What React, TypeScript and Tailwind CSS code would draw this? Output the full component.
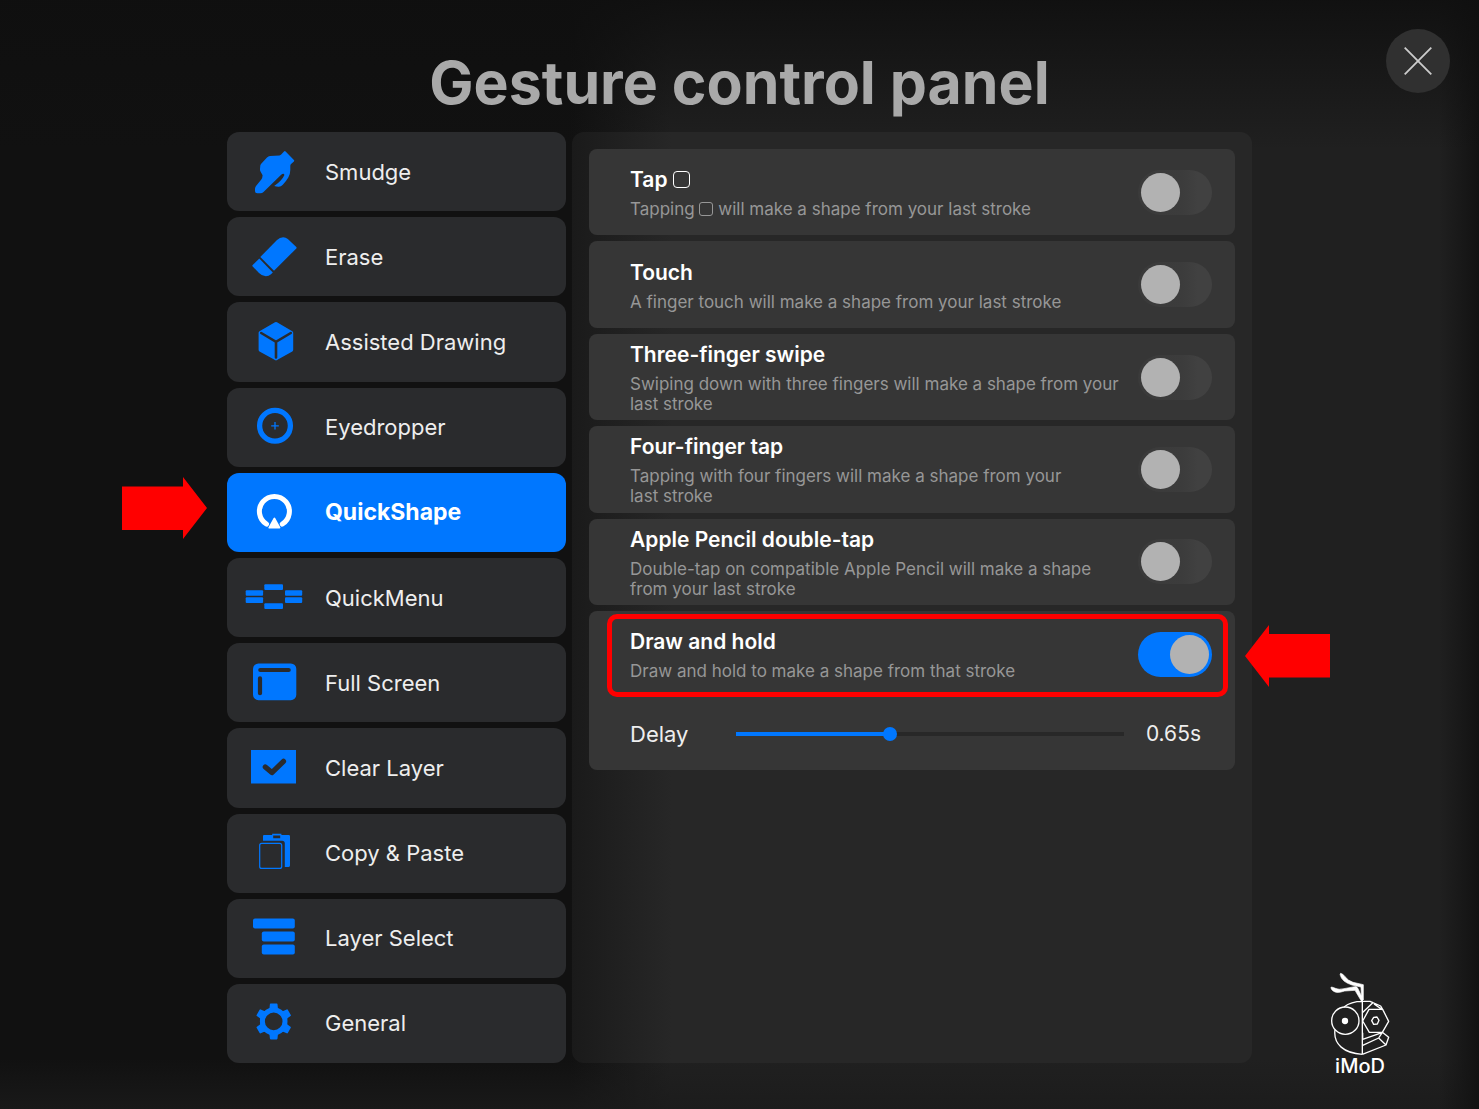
import { useState, type ReactNode } from "react";
import clsx from "clsx";

type NavItem = { id: string; label: string; icon: ReactNode };

type Gesture = {
  id: string;
  title: ReactNode;
  description: ReactNode;
};

/** 60×60 icon frame; "tile" strokes cut through to the card colour. */
function Icon({ children }: { children: ReactNode }) {
  return (
    <svg viewBox="0 0 60 60" className="size-[60px] shrink-0" fill="currentColor" aria-hidden>
      {children}
    </svg>
  );
}

const NAV: NavItem[] = [
  {
    id: "smudge",
    label: "Smudge",
    icon: (
      <Icon>
        <path d="M40 9.4q.8-.8 1.6 0l8.3 8.5q.8.8 0 1.6l-2.8 2.600q-.8.8-.8 1.8V28q0 4-2 7.500t-5.500 7.200q-1.800 1.900-4 2t-4.600-.8q3.800-2.400 6.500-5.400t3.600-5.200q.2-1.300-.8-1.500t-2.600 1.200L19.500 50q-1.300 1.300-3.200 1.300h-3Q11 51.300 11 49.300v-2.500q0-1.400 1-2.800l5.300-6.500q1.200-1.800 1.300-4.200L16.500 29.500q-.7-1-.5-2.400l.3-3.500q.1-1 .9-1.900l5.800-6.300q1.300-1.300 3-1.400l9.500-.6q1 0 1.700-.8z" />
      </Icon>
    ),
  },
  {
    id: "erase",
    label: "Erase",
    icon: (
      <Icon>
        <path d="M16.300 30 33 13q2.800-2.700 6.200-2.700 2.600 0 4.600 1.800l8.500 8q.6.700 0 1.400L30 43.700z" />
        <path d="m15.300 31.500-6.600 6.500q-.7.700 0 1.500l6.300 6.500q3.300 3.300 6.800 3.300 3 0 5.200-2.100l1.800-1.800z" />
      </Icon>
    ),
  },
  {
    id: "assisted",
    label: "Assisted Drawing",
    icon: (
      <Icon>
        <path d="M31 10.300q1-.6 2 0l15.300 8.900q.9.600.9 1.600v17q0 1-.9 1.600L33 48.100q-1 .6-2 0l-15.500-8.700q-.9-.6-.9-1.600v-17q0-1 .9-1.600z" />
        <path
          d="M17.200 21 32 29.800 46.800 21M32 29.800v15.700"
          fill="none"
          stroke="#2a2b2d"
          strokeWidth="2.600"
          strokeLinecap="round"
        />
      </Icon>
    ),
  },
  {
    id: "eyedropper",
    label: "Eyedropper",
    icon: (
      <Icon>
        <g fill="none" stroke="currentColor">
          <circle cx="31" cy="28.800" r="15.400" strokeWidth="5.300" />
          <path d="M31 25v7.600M27.200 28.800h7.600" strokeWidth="1.300" />
        </g>
      </Icon>
    ),
  },
  {
    id: "quickshape",
    label: "QuickShape",
    icon: (
      <Icon>
        <path
          d="M22.600 42.200a15 15 0 1 1 15.600 0"
          fill="none"
          stroke="currentColor"
          strokeWidth="5"
          strokeLinecap="round"
        />
        {/* clears the ring ends around the pointer */}
        <path d="M30.400 32.500 22.500 48h15.800z" fill="#0077ff" />
        <path
          d="M30.400 36.500 25.300 45.600h10.200z"
          stroke="currentColor"
          strokeWidth="1.800"
          strokeLinejoin="round"
        />
      </Icon>
    ),
  },
  {
    id: "quickmenu",
    label: "QuickMenu",
    icon: (
      <Icon>
        <rect x="1.700" y="22.300" width="17.400" height="5.500" rx="1" />
        <rect x="1.700" y="29.300" width="17.400" height="5.700" rx="1" />
        <rect x="20.300" y="16.300" width="18.700" height="5.800" rx="1" />
        <rect x="20.300" y="35.200" width="18.700" height="5.800" rx="1" />
        <rect x="41" y="22.300" width="17.200" height="5.500" rx="1" />
        <rect x="41" y="29.300" width="17.200" height="5.700" rx="1" />
      </Icon>
    ),
  },
  {
    id: "fullscreen",
    label: "Full Screen",
    icon: (
      <Icon>
        <rect x="9" y="10.500" width="43.300" height="36.700" rx="5.500" />
        <path
          d="M16.300 17h28.400M16 25.300v14.900"
          stroke="#2a2b2d"
          strokeWidth="4.200"
          strokeLinecap="round"
        />
      </Icon>
    ),
  },
  {
    id: "clear",
    label: "Clear Layer",
    icon: (
      <Icon>
        <path d="M7 12h45v33.500H7z" />
        <path
          d="m21.300 29 6.600 5.600L39.500 23.300"
          fill="none"
          stroke="#2a2b2d"
          strokeWidth="5.200"
          strokeLinecap="round"
          strokeLinejoin="round"
        />
      </Icon>
    ),
  },
  {
    id: "copy",
    label: "Copy & Paste",
    icon: (
      <Icon>
        <path
          fillRule="evenodd"
          d="M20 12h8.200v-1.200h9.200V12h7.300q1.300 0 1.300 1.300v29.300q0 1.300-1.300 1.300h-3.900V20.500q0-2.700-2.700-2.700H19V13q0-1 1-1zm9.200.4v2.800h7v-2.800z"
        />
        <rect
          x="15.700"
          y="20.400"
          width="22"
          height="25"
          rx="2"
          fill="none"
          stroke="currentColor"
          strokeWidth="1.200"
        />
      </Icon>
    ),
  },
  {
    id: "layers",
    label: "Layer Select",
    icon: (
      <Icon>
        <rect x="9" y="10.600" width="41.800" height="10" rx="2" />
        <rect x="17.800" y="23.600" width="33" height="10" rx="2" />
        <rect x="17.800" y="36.600" width="33" height="10" rx="2" />
      </Icon>
    ),
  },
  {
    id: "general",
    label: "General",
    icon: (
      <Icon>
        <circle cx="29.700" cy="28.400" r="11.300" fill="none" stroke="currentColor" strokeWidth="5" />
        {[0, 60, 120, 180, 240, 300].map((deg) => (
          <path
            key={deg}
            transform={`rotate(${deg} 29.700 28.400)`}
            d="M26.700 10.400h6q.8 0 .8.800l.4 3.800 2 2.500H23.500l2-2.500.4-3.800q0-.8.8-.8z"
          />
        ))}
      </Icon>
    ),
  },
];

const GESTURES: Gesture[] = [
  {
    id: "tap",
    title: (
      <>
        Tap <span className="inline-block size-[17px] rounded-[4px] border border-white align-[-1px]" />
      </>
    ),
    description: (
      <>
        Tapping{" "}
        <span className="inline-block size-3.5 rounded-[3px] border border-[#979797] align-[-1px]" />{" "}
        will make a shape from your last stroke
      </>
    ),
  },
  {
    id: "touch",
    title: "Touch",
    description: "A finger touch will make a shape from your last stroke",
  },
  {
    id: "three-finger",
    title: "Three-finger swipe",
    description: "Swiping down with three fingers will make a shape from your\nlast stroke",
  },
  {
    id: "four-finger",
    title: "Four-finger tap",
    description: "Tapping with four fingers will make a shape from your\nlast stroke",
  },
  {
    id: "pencil",
    title: "Apple Pencil double-tap",
    description: "Double-tap on compatible Apple Pencil will make a shape\nfrom your last stroke",
  },
];

const HOLD: Gesture = {
  id: "hold",
  title: "Draw and hold",
  description: "Draw and hold to make a shape from that stroke",
};

function ToggleRow({ gesture, defaultOn = false }: { gesture: Gesture; defaultOn?: boolean }) {
  return (
    <label
      htmlFor={gesture.id}
      className="flex min-h-[86px] flex-1 cursor-pointer items-center justify-between pr-[23px] pl-[41px]"
    >
      <span className="block">
        <span className="block text-[21px] leading-[30px] font-semibold text-white">
          {gesture.title}
        </span>
        <span className="mt-1 block text-[17px] leading-5 whitespace-pre-line text-[#979797]">
          {gesture.description}
        </span>
      </span>
      <input
        id={gesture.id}
        type="checkbox"
        role="switch"
        defaultChecked={defaultOn}
        className="h-[45px] w-[74px] shrink-0 cursor-pointer appearance-none rounded-full bg-[linear-gradient(to_right,#3a3a3a_0,#3c3c3c_45px,#414141_60px)] p-[3px] before:block before:size-[39px] before:rounded-full before:bg-[#b2b2b2] before:content-[''] checked:bg-[#0077ff] checked:bg-none checked:before:ml-[29px]"
      />
    </label>
  );
}

function DelaySlider() {
  const min = 0.1;
  const max = 1.5;
  const [delay, setDelay] = useState(0.65);
  const pct = ((delay - min) / (max - min)) * 100;
  return (
    <div className="flex h-[73px] items-center pr-[34px] pl-[41px]">
      <label htmlFor="delay" className="w-[106px] text-[22px] leading-7 text-[#eeeeee]">
        Delay
      </label>
      <input
        id="delay"
        type="range"
        min={min}
        max={max}
        step={0.05}
        value={delay}
        onChange={(e) => setDelay(Number(e.target.value))}
        className="h-1 min-w-0 flex-1 cursor-pointer appearance-none [&::-webkit-slider-thumb]:size-3.5 [&::-webkit-slider-thumb]:appearance-none [&::-webkit-slider-thumb]:rounded-full [&::-webkit-slider-thumb]:bg-[#0077ff]"
        style={{ background: `linear-gradient(to right, #0077ff ${pct}%, #282828 ${pct}%)` }}
      />
      <output htmlFor="delay" className="w-[77px] text-right text-[21px] leading-7 text-[#eeeeee]">
        {delay.toFixed(2)}s
      </output>
    </div>
  );
}

function Arrow({ className }: { className: string }) {
  return (
    <svg viewBox="0 0 85 62" className={clsx("h-[62px] w-[85px]", className)} aria-hidden>
      <path d="M0 9.500h61V0l24 31-24 31v-9H0z" fill="#ff0000" />
    </svg>
  );
}

function Logo() {
  return (
    <div className="absolute right-[87px] bottom-[33px] flex w-16 flex-col items-center text-white">
      <svg
        viewBox="54 36 192 252"
        className="h-[84px] w-16"
        fill="none"
        stroke="currentColor"
        strokeWidth="4"
        strokeLinejoin="round"
        aria-hidden
      >
        {/* antennae */}
        <path
          d="M92 40q8 2 13 10 9 12 24 17l31 7v45l-5 4-2-42-27-6Q96 66 91 46q-2-5 1-6zM64 81q6 1 12 4 10 5 26 1l32-6q6-1 9 4l16 34-5 5-19-32-31 2Q74 104 64 87q-2-5 0-6z"
          fill="currentColor"
          strokeWidth="2"
        />
        {/* left half of the head */}
        <path d="M157 124q-34 0-55 17M75 209c-6 44 28 71 82 74M157 120v163" />
        <circle cx="106" cy="182" r="41" />
        <circle cx="105" cy="183" r="9.500" fill="currentColor" stroke="none" />
        {/* faceted right half */}
        <path d="M157 124h23l32 14 8 14M177 148h41l18 36-19 33h-39l-20-34zM157 158l33-31M192 132l25 17" />
        <path d="m191 172 10-1 6 10-5 11-11 1-6-11z" />
        <path d="m217 217 19 15-8 23-71 28M158 238l58-20M158 256l48-22 22 21M206 234l11-17M158 238v-20" />
      </svg>
      <span className="text-[20px] leading-5 font-medium">iMoD</span>
    </div>
  );
}

export default function App() {
  const [active, setActive] = useState("quickshape");
  return (
    <div className="relative min-h-screen bg-[linear-gradient(to_bottom,rgba(15,15,15,0.9)_0,rgba(15,15,15,0)_150px),linear-gradient(to_left,#121212_0,rgba(18,18,18,0)_40px),linear-gradient(to_top,rgba(27,27,27,0.8)_0,rgba(27,27,27,0)_50px),linear-gradient(to_right,#111111_0,#111111_570px,#202020_670px,#202020_100%)] font-['Inter','Liberation_Sans',sans-serif]">
      <button
        type="button"
        aria-label="Close"
        className="absolute top-[29px] right-[29px] flex size-16 cursor-pointer items-center justify-center rounded-full bg-[#303030] text-[#cccccc]"
      >
        <svg viewBox="0 0 28 28" className="size-7" stroke="currentColor" strokeWidth="1.800" aria-hidden>
          <path d="m.7.700 26.600 26.600M27.300.7.700 27.300" />
        </svg>
      </button>

      <div className="mx-auto w-full max-w-[1025px] pt-12 pb-[46px]">
        <h1 className="text-center text-[59px] leading-[70px] font-bold text-[#a9a9a9]">
          Gesture control panel
        </h1>

        <div className="mt-3.5 grid min-h-[931px] grid-cols-[minmax(0,339fr)_minmax(0,680fr)] gap-1.5">
          <nav className="flex flex-col gap-1.5">
            {NAV.map((item) => {
              const on = item.id === active;
              return (
                <div key={item.id} className="relative flex min-h-[79px] flex-1">
                  <button
                    type="button"
                    aria-current={on ? "page" : undefined}
                    onClick={() => setActive(item.id)}
                    className={clsx(
                      "flex flex-1 cursor-pointer items-center gap-[21px] rounded-xl pl-[17px] text-left leading-7",
                      on
                        ? "bg-[#0077ff] text-[23px] font-bold text-white"
                        : "bg-[#2a2b2d] text-[22px] text-[#eeeeee]",
                    )}
                  >
                    <span className={on ? "text-white" : "text-[#0077ff]"}>{item.icon}</span>
                    {item.label}
                  </button>
                  {item.id === "quickshape" && <Arrow className="absolute top-1 right-full mr-5" />}
                </div>
              );
            })}
          </nav>

          <main className="rounded-xl bg-[linear-gradient(to_right,#1a1a1a_0,#202020_45px,#272727_100px,#272727_100%)] p-[17px]">
            <div className="flex min-h-[621px] flex-col gap-1.5">
              {GESTURES.map((g) => (
                <section key={g.id} className="flex flex-1 rounded-lg bg-[#363636]">
                  <ToggleRow gesture={g} />
                </section>
              ))}
              <section className="rounded-lg bg-[#363636]">
                <div className="relative flex">
                  <ToggleRow gesture={HOLD} defaultOn />
                  <div className="pointer-events-none absolute top-[3px] right-[7px] bottom-0 left-[18px] rounded-[10px] border-5 border-[#ff0000]" />
                  <Arrow className="absolute top-3.5 left-full ml-2.5 rotate-180" />
                </div>
                <DelaySlider />
              </section>
            </div>
          </main>
        </div>
      </div>

      <Logo />
    </div>
  );
}
